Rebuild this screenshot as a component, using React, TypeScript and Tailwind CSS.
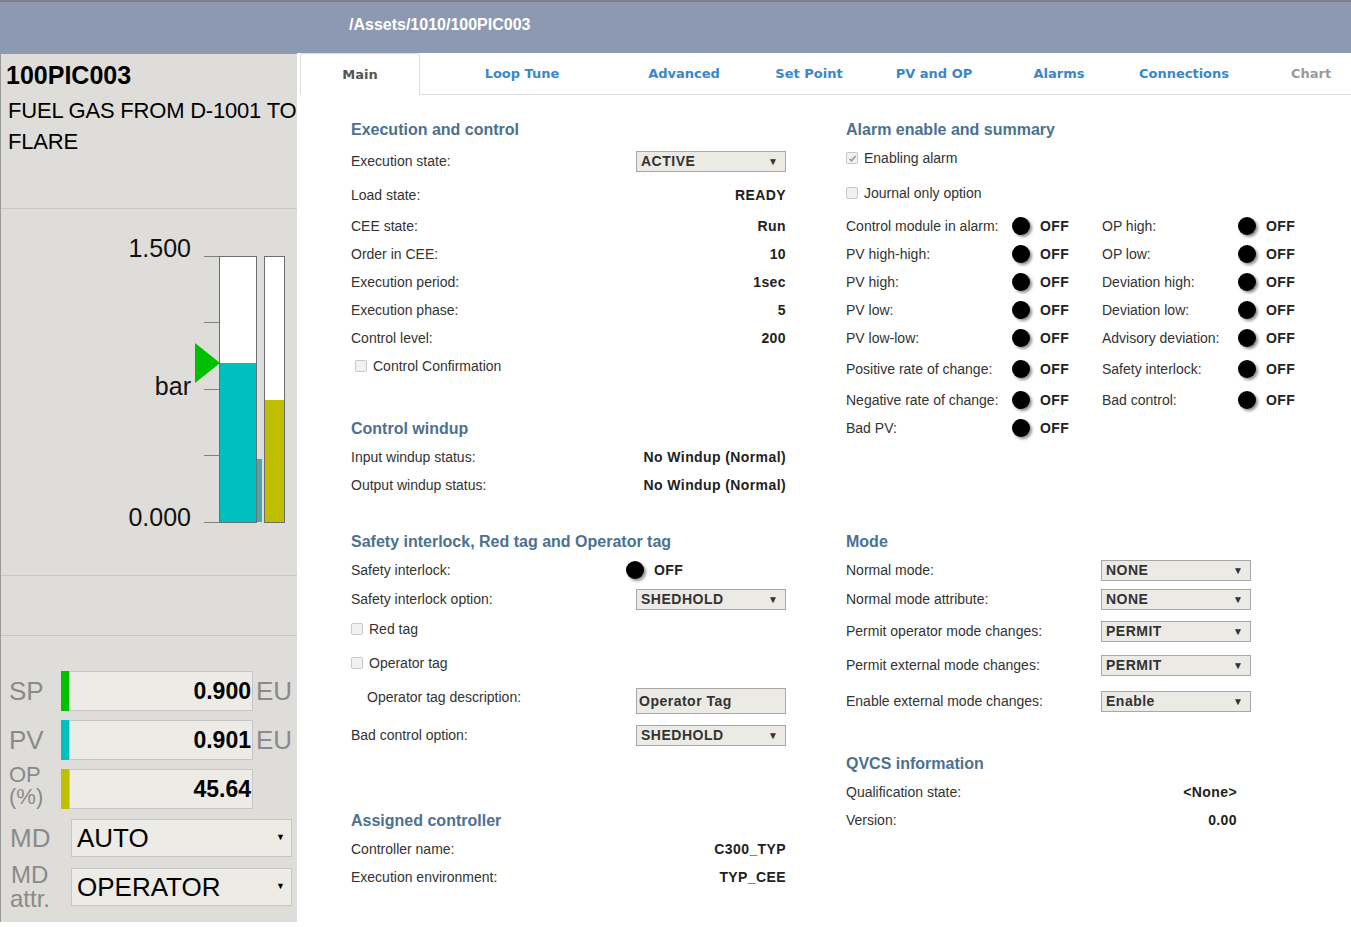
import React from "react";

type Kids = { children?: React.ReactNode; className?: string };

const alarmRows = [
  { left: "Control module in alarm:", right: "OP high:", gap: "" },
  { left: "PV high-high:", right: "OP low:", gap: "" },
  { left: "PV high:", right: "Deviation high:", gap: "" },
  { left: "PV low:", right: "Deviation low:", gap: "" },
  { left: "PV low-low:", right: "Advisory deviation:", gap: "" },
  { left: "Positive rate of change:", right: "Safety interlock:", gap: "mt-[3px]" },
  { left: "Negative rate of change:", right: "Bad control:", gap: "mt-[3px]" },
  { left: "Bad PV:", right: "", gap: "" },
];

const tabs = [
  { label: "Loop Tune", w: "w-[204px]" },
  { label: "Advanced", w: "w-[120px]" },
  { label: "Set Point", w: "w-[130px]" },
  { label: "PV and OP", w: "w-[120px]" },
  { label: "Alarms", w: "w-[130px]" },
  { label: "Connections", w: "w-[120px]" },
];

const Heading = ({ children, className = "" }: Kids) => (
  <div className={`flex h-7 items-center pt-[1px] text-[16px] font-bold text-[#4c7190] ${className}`}>
    {children}
  </div>
);

const Row = ({ label, children, className = "" }: Kids & { label: string }) => (
  <div className={`flex h-7 items-center justify-between ${className}`}>
    <span className="text-[14px] text-[#333]">{label}</span>
    {children}
  </div>
);

const Value = ({ children }: Kids) => (
  <span className="text-[14px] font-bold tracking-[0.4px] text-[#222]">{children}</span>
);

const Select = ({ value, className = "" }: { value: string; className?: string }) => (
  <div
    className={`flex h-[21px] w-[150px] items-center justify-between border border-[#a8a8a8] bg-[#ebeae4] pl-[4px] pr-[7px] ${className}`}
  >
    <span className="text-[14px] font-bold tracking-[0.5px] text-[#333]">{value}</span>
    <span className="text-[10px] text-[#333]">▼</span>
  </div>
);

const Dot = () => (
  <span className="block h-[18px] w-[18px] shrink-0 rounded-full bg-black shadow-[2px_2px_3px_rgba(0,0,0,0.45)]" />
);

const Off = () => (
  <span className="flex items-center">
    <Dot />
    <span className="ml-[10px] text-[14px] font-bold tracking-[0.4px] text-[#222]">OFF</span>
  </span>
);

const Check = ({ checked = false }: { checked?: boolean }) => (
  <span className="flex h-[12px] w-[12px] items-center justify-center rounded-[2px] border border-[#c8c8c8] bg-[#f1f1f1]">
    {checked && (
      <svg width="9" height="9" viewBox="0 0 9 9">
        <path d="M1.5 4.8 L3.6 6.8 L7.6 2" fill="none" stroke="#9a9a9a" strokeWidth="1.6" />
      </svg>
    )}
  </span>
);

const CheckRow = ({ label, checked, className = "" }: Kids & { label: string; checked?: boolean }) => (
  <div className={`flex h-7 items-center gap-[6px] ${className}`}>
    <Check checked={checked} />
    <span className="text-[14px] text-[#333]">{label}</span>
  </div>
);

const Chart = () => (
  <svg width="296" height="366" className="block" fontFamily="Liberation Sans, Arial, sans-serif">
    <text x="190" y="48" textAnchor="end" fontSize="25" fill="#111">1.500</text>
    {[47.5, 113.5, 180.5, 246.5, 313.5].map((y) => (
      <line key={y} x1="203" x2="218" y1={y} y2={y} stroke="#808080" />
    ))}
    <rect x="218.5" y="47.5" width="37" height="266" fill="#fff" stroke="#6e6e6e" />
    <rect x="219" y="154" width="36" height="159" fill="#00bfbf" />
    <rect x="256" y="250" width="5" height="63" fill="#4aa8a8" />
    <rect x="263.5" y="47.5" width="20" height="266" fill="#fff" stroke="#6e6e6e" />
    <rect x="264" y="191" width="19" height="122" fill="#bfbf00" />
    <polygon points="194,134 219,154 194,174" fill="#00c000" />
    <text x="190" y="186" textAnchor="end" fontSize="25" fill="#111">bar</text>
    <text x="190" y="317" textAnchor="end" fontSize="25" fill="#111">0.000</text>
  </svg>
);

const Readout = ({ label, color, value, unit }: { label: React.ReactNode; color: string; value: string; unit?: string }) => (
  <div className="flex h-[40px] items-stretch">
    <div className="flex w-[60px] items-center pl-[8px] text-[26px] text-[#8a8a8a]">{label}</div>
    <span className={`w-[8px] ${color}`} />
    <div className="flex w-[184px] items-center justify-end border border-[#c6c6c6] bg-[#ecebe5] pr-[1px] text-[23px] font-bold text-black">
      {value}
    </div>
    {unit && <span className="ml-[3px] flex items-center text-[26px] text-[#8a8a8a]">{unit}</span>}
  </div>
);

const ModeSelect = ({ label, value }: { label: React.ReactNode; value: string }) => (
  <div className="flex h-[38px] items-stretch">
    <div className="flex w-[70px] flex-col justify-center pl-[9px] text-[26px] text-[#8a8a8a]">{label}</div>
    <div className="flex w-[221px] items-center justify-between border border-[#c6c6c6] bg-[#ecebe5] pl-[5px] pr-[6px]">
      <span className="text-[26px] text-black">{value}</span>
      <span className="text-[9px] text-black">▼</span>
    </div>
  </div>
);

export default function App() {
  return (
    <div className="h-[927px] w-[1351px] overflow-hidden bg-white font-['Liberation_Sans',Arial,sans-serif]">
      <header className="h-[53px] border-t-2 border-[#7d8089] bg-[#8d98b1] pl-[349px] pt-[13px] text-[16px] leading-[20px] font-bold text-white">
        /Assets/1010/100PIC003
      </header>

      <div className="flex">
        {/* Faceplate */}
        <aside className="h-[869px] w-[297px] border-l border-t border-[#9a9a9a] bg-[#dfddd9]">
          <div className="h-[155px] border-b border-[#c9c7c3] pl-[5px] pt-[6px]">
            <div className="text-[25px] leading-[30px] font-bold text-black">100PIC003</div>
            <div className="mt-[5px] whitespace-nowrap pl-[2px] text-[22px] leading-[31px] tracking-[-0.2px] text-black">
              FUEL GAS FROM D-1001 TO
              <br />
              FLARE
            </div>
          </div>
          <div className="h-[367px] border-b border-[#c9c7c3]">
            <Chart />
          </div>
          <div className="h-[60px] border-b border-[#c9c7c3]" />
          <div className="flex flex-col pt-[35px]">
            <Readout label="SP" color="bg-[#00c000]" value="0.900" unit="EU" />
            <div className="mt-[9px]">
              <Readout label="PV" color="bg-[#00c0c0]" value="0.901" unit="EU" />
            </div>
            <div className="mt-[9px]">
              <Readout
                label={
                  <span className="-mt-[6px] flex flex-col text-[22px] leading-[22px]">
                    <span>OP</span>
                    <span>(%)</span>
                  </span>
                }
                color="bg-[#c0c000]"
                value="45.64"
              />
            </div>
            <div className="mt-[10px]">
              <ModeSelect label="MD" value="AUTO" />
            </div>
            <div className="mt-[11px]">
              <ModeSelect
                label={
                  <span className="flex flex-col items-start text-[24px] leading-[24px]">
                    <span className="pl-[1px]">MD</span>
                    <span>attr.</span>
                  </span>
                }
                value="OPERATOR"
              />
            </div>
          </div>
        </aside>

        <main className="ml-[3px] flex-1">
          {/* Tabs */}
          <nav className="flex h-[42px] font-['DejaVu_Sans',Verdana,sans-serif] text-[13px] font-bold">
            <div className="flex w-[120px] items-center justify-center rounded-t-[3px] border-l border-r border-t border-[#dddddd] text-[#555]">
              Main
            </div>
            {tabs.map((t) => (
              <div key={t.label} className={`flex ${t.w} items-center justify-center border-b border-[#dddddd] text-[#3a87c8]`}>
                {t.label}
              </div>
            ))}
            <div className="flex flex-1 items-center border-b border-[#dddddd] pl-[47px] text-[#9a9a9a]">Chart</div>
          </nav>

          <div className="flex gap-[60px] pl-[51px] pt-[20px]">
            {/* Left column */}
            <section className="flex w-[435px] flex-col">
              <Heading>Execution and control</Heading>
              <Row label="Execution state:" className="mt-[4px]">
                <Select value="ACTIVE" />
              </Row>
              <Row label="Load state:" className="mt-[6px]"><Value>READY</Value></Row>
              <Row label="CEE state:" className="mt-[3px]"><Value>Run</Value></Row>
              <Row label="Order in CEE:"><Value>10</Value></Row>
              <Row label="Execution period:"><Value>1sec</Value></Row>
              <Row label="Execution phase:"><Value>5</Value></Row>
              <Row label="Control level:"><Value>200</Value></Row>
              <CheckRow label="Control Confirmation" className="pl-[4px]" />

              <Heading className="mt-[34px]">Control windup</Heading>
              <Row label="Input windup status:" className="mt-[1px]"><Value>No Windup (Normal)</Value></Row>
              <Row label="Output windup status:"><Value>No Windup (Normal)</Value></Row>

              <Heading className="mt-[28px]">Safety interlock, Red tag and Operator tag</Heading>
              <Row label="Safety interlock:" className="mt-[1px]">
                <span className="w-[160px]"><Off /></span>
              </Row>
              <Row label="Safety interlock option:" className="mt-[1px]">
                <Select value="SHEDHOLD" />
              </Row>
              <CheckRow label="Red tag" className="mt-[2px]" />
              <CheckRow label="Operator tag" className="mt-[6px]" />
              <div className="mt-[6px] flex h-[31px] items-start justify-between">
                <span className="pl-[16px] text-[14px] leading-[28px] text-[#333]">Operator tag description:</span>
                <div className="mt-[5px] flex h-[26px] w-[150px] items-center border border-[#a8a8a8] bg-[#ebeae4] pl-[2px] text-[14px] font-bold tracking-[0.5px] text-[#333]">
                  Operator Tag
                </div>
              </div>
              <Row label="Bad control option:" className="mt-[7px]">
                <Select value="SHEDHOLD" />
              </Row>

              <Heading className="mt-[57px]">Assigned controller</Heading>
              <Row label="Controller name:" className="mt-[1px]"><Value>C300_TYP</Value></Row>
              <Row label="Execution environment:"><Value>TYP_CEE</Value></Row>
            </section>

            {/* Right column */}
            <section className="flex w-[405px] flex-col">
              <Heading>Alarm enable and summary</Heading>
              <CheckRow label="Enabling alarm" checked className="mt-[1px]" />
              <CheckRow label="Journal only option" className="mt-[7px]" />
              <div className="mt-[5px] flex flex-col">
                {alarmRows.map((r) => (
                  <div key={r.left} className={`grid h-7 grid-cols-[256px_1fr] items-center ${r.gap}`}>
                    <div className="flex items-center">
                      <span className="w-[166px] text-[14px] text-[#333]">{r.left}</span>
                      <Off />
                    </div>
                    {r.right && (
                      <div className="flex items-center">
                        <span className="w-[136px] text-[14px] text-[#333]">{r.right}</span>
                        <Off />
                      </div>
                    )}
                  </div>
                ))}
              </div>

              <Heading className="mt-[85px]">Mode</Heading>
              <div className="w-[405px]">
                <Row label="Normal mode:" className="mt-[1px]"><Select value="NONE" className="w-[149px]" /></Row>
                <Row label="Normal mode attribute:" className="mt-[1px]"><Select value="NONE" className="w-[149px]" /></Row>
                <Row label="Permit operator mode changes:" className="mt-[4px]"><Select value="PERMIT" className="w-[149px]" /></Row>
                <Row label="Permit external mode changes:" className="mt-[6px]"><Select value="PERMIT" className="w-[149px]" /></Row>
                <Row label="Enable external mode changes:" className="mt-[8px]"><Select value="Enable" className="w-[149px]" /></Row>
              </div>

              <Heading className="mt-[34px]">QVCS information</Heading>
              <div className="w-[391px]">
                <Row label="Qualification state:" className="mt-[1px]"><Value>&lt;None&gt;</Value></Row>
                <Row label="Version:"><Value>0.00</Value></Row>
              </div>
            </section>
          </div>
        </main>
      </div>
    </div>
  );
}
